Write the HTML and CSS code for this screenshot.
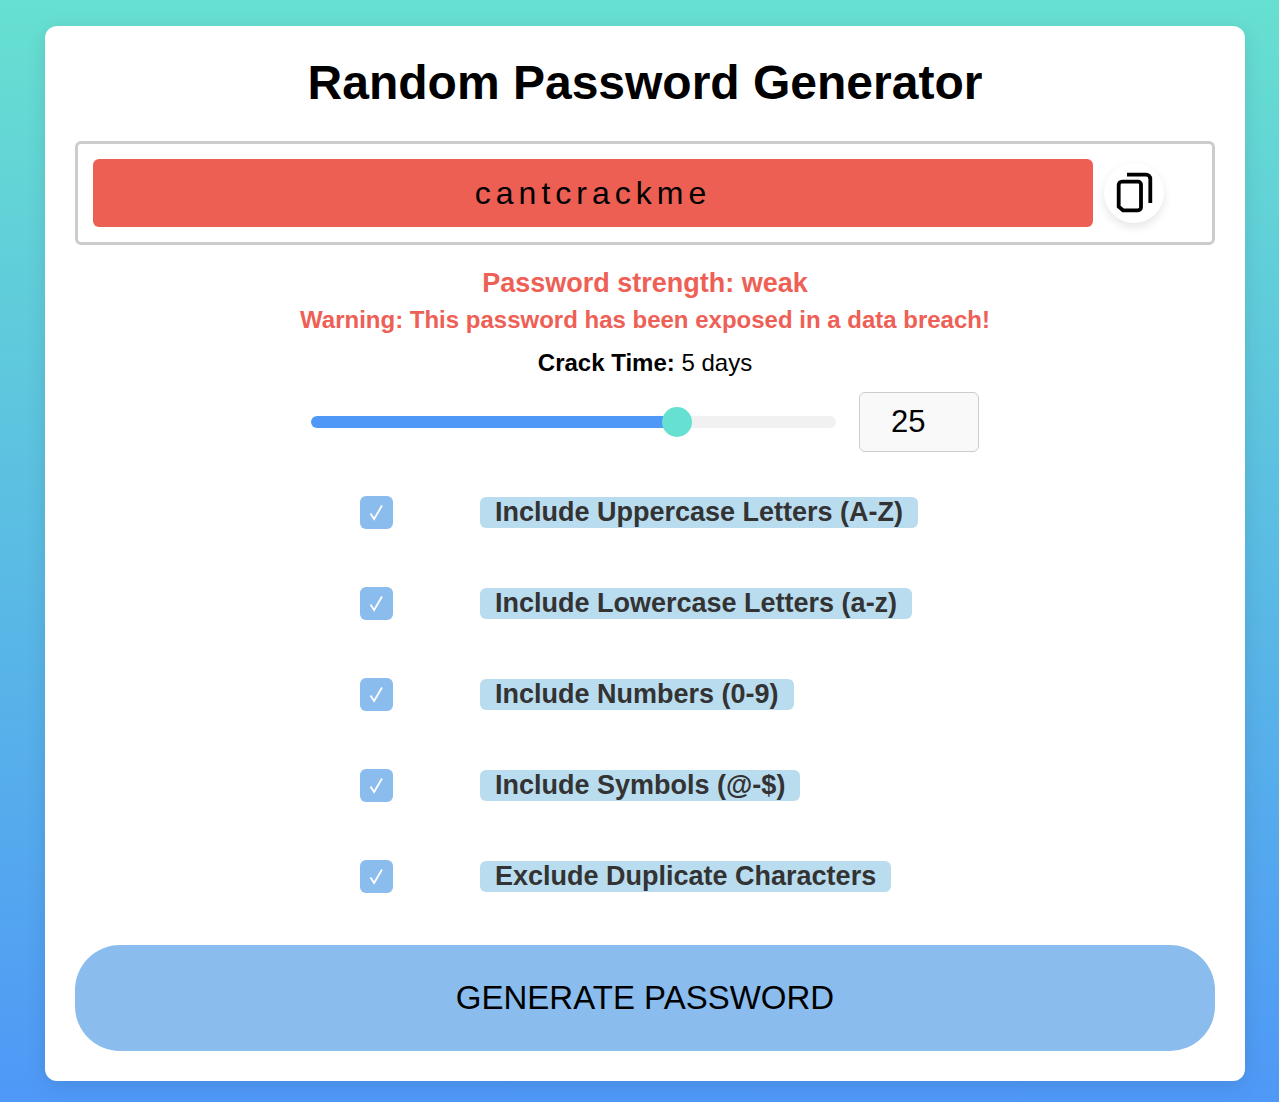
FILE: index.html
```html
<!DOCTYPE html>
<html lang="en">

<head>
    <meta charset="UTF-8">
    <meta name="viewport" content="width=device-width, initial-scale=1.0">
    <title>Random Password Generator</title>
    <link rel="stylesheet" href="styles.css">
</head>

<body>
    <div class="container">
        <h1>Random Password Generator</h1>

        <div class="password-box">
            <div class="password-output">cantcrackme</div>
            <button class="copy-btn" aria-label="Copy password">
                <svg width="38" height="44" viewBox="0 0 38 44" fill="none" stroke="#000" stroke-width="3.8">
                    <path d="M7 10.7h16a3 3 0 0 1 3 3v22.6a3 3 0 0 1-3 3H8l-4.3-3.6V14a3.3 3.3 0 0 1 3.3-3.3z" />
                    <path d="M12 3.7h19a4.3 4.3 0 0 1 4.3 4.3v24" />
                </svg>
            </button>
        </div>

        <p class="strength">Password strength: weak</p>
        <p class="warning">Warning: This password has been exposed in a data breach!</p>
        <p class="crack-time"><b>Crack Time:</b> 5 days</p>

        <div class="length-row">
            <input type="range" class="slider" min="8" max="32" value="25">
            <input type="number" class="length-input" value="25">
        </div>

        <div class="options">
            <label class="option">
                <input type="checkbox" checked>
                <span>Include Uppercase Letters (A-Z)</span>
            </label>
            <label class="option">
                <input type="checkbox" checked>
                <span>Include Lowercase Letters (a-z)</span>
            </label>
            <label class="option">
                <input type="checkbox" checked>
                <span>Include Numbers (0-9)</span>
            </label>
            <label class="option">
                <input type="checkbox" checked>
                <span>Include Symbols (@-$)</span>
            </label>
            <label class="option">
                <input type="checkbox" checked>
                <span>Exclude Duplicate Characters</span>
            </label>
        </div>

        <button class="generate-btn">GENERATE PASSWORD</button>
    </div>
</body>

</html>
```

FILE: styles.css
```css
* {
    box-sizing: border-box;
}

html,
body {
    height: 100%;
}

body {
    margin: 0;
    padding: 26px 0 21px 45px;
    font-family: "Liberation Sans", Arial, sans-serif;
    background: linear-gradient(to bottom, #66e0d0, #4f98f7);
    overflow: hidden;
}

.container {
    width: 1200px;
    height: 1055px;
    padding: 30px;
    background-color: #fff;
    border-radius: 12px;
    box-shadow: 0 4px 20px rgba(0, 0, 0, 0.1);
}

h1 {
    margin: 0;
    height: 85px;
    font-size: 48px;
    line-height: 54px;
    text-align: center;
    color: #000;
}

.password-box {
    display: flex;
    align-items: center;
    gap: 11px;
    height: 104px;
    padding: 0 15px;
    border: 3px solid #ccc;
    border-radius: 6px;
}

.password-output {
    width: 1000px;
    height: 68px;
    line-height: 68px;
    text-align: center;
    font-size: 32px;
    letter-spacing: 5px;
    background-color: #ed5f53;
    border-radius: 6px;
}

.copy-btn {
    display: flex;
    align-items: center;
    justify-content: center;
    width: 60px;
    height: 60px;
    padding: 0;
    background-color: #fff;
    border: none;
    border-radius: 50%;
    box-shadow: 0 4px 10px rgba(0, 0, 0, 0.1);
}

.strength,
.warning {
    margin: 0;
    text-align: center;
    font-weight: bold;
    color: #ee6055;
}

.strength {
    margin-top: 20px;
    font-size: 27px;
    line-height: 36px;
}

.warning {
    margin-top: 1px;
    font-size: 24px;
    line-height: 36px;
}

.crack-time {
    margin: 7px 0 0;
    font-size: 24px;
    line-height: 36px;
    text-align: center;
}

.length-row {
    display: flex;
    align-items: center;
    gap: 23px;
    height: 60px;
    margin-top: 11px;
    padding-left: 236px;
}

.slider {
    -webkit-appearance: none;
    appearance: none;
    width: 525px;
    height: 12px;
    margin: 0;
    border-radius: 6px;
    background: linear-gradient(to right, #4f98f7 70%, #f1f1f1 70%);
}

.slider::-webkit-slider-thumb {
    -webkit-appearance: none;
    width: 30px;
    height: 30px;
    border-radius: 50%;
    background-color: #66e0d0;
}

.length-input {
    width: 120px;
    height: 60px;
    padding: 0 0 0 31px;
    font-family: inherit;
    font-size: 31px;
    background-color: #f9f9f9;
    border: 1px solid #ccc;
    border-radius: 6px;
    -moz-appearance: textfield;
}

.length-input::-webkit-inner-spin-button {
    -webkit-appearance: none;
}

.options {
    margin-top: 15px;
    padding-left: 285px;
}

.option {
    display: flex;
    align-items: center;
    height: 91px;
}

.option input {
    -webkit-appearance: none;
    appearance: none;
    width: 33px;
    height: 33px;
    margin: 0 87px 0 0;
    background-color: #8abcee;
    border-radius: 6px;
}

.option input:checked {
    background-image: url("data:image/svg+xml,%3Csvg xmlns='http://www.w3.org/2000/svg' viewBox='0 0 33 33'%3E%3Cpath d='M10.5 17.5l3.6 5.5L22 9.5' fill='none' stroke='%23fff' stroke-width='1.8'/%3E%3C/svg%3E");
}

.option span {
    padding: 0 15px;
    font-size: 27px;
    line-height: 31px;
    font-weight: bold;
    color: #333;
    background-color: #b9dcef;
    border-radius: 6px;
}

.generate-btn {
    display: block;
    width: 1140px;
    height: 106px;
    margin-top: 23px;
    font-family: inherit;
    font-size: 33px;
    color: #000;
    background-color: #8abcee;
    border: none;
    border-radius: 45px;
}
```
